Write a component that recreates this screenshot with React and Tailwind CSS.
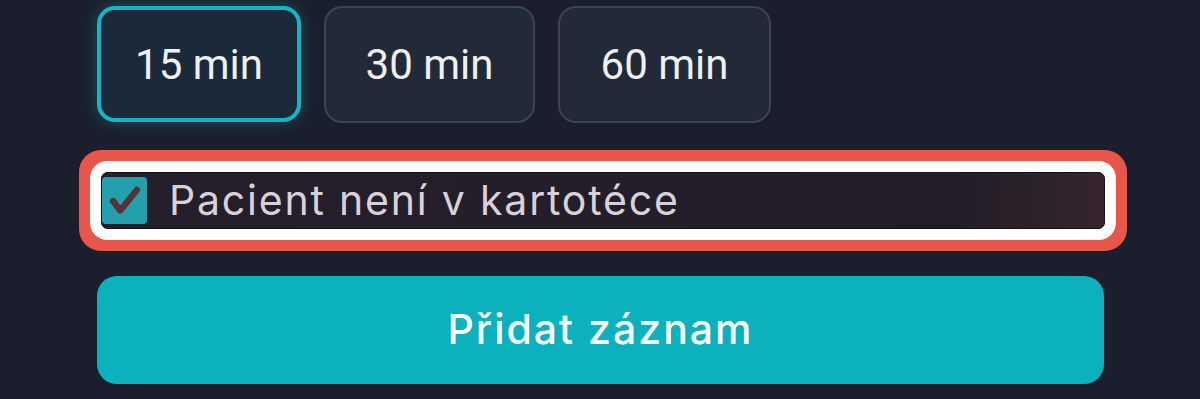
import React, { useState } from "react";

const DURATIONS = [
  { label: "15 min", width: "w-[204px]" },
  { label: "30 min", width: "w-[211px]" },
  { label: "60 min", width: "w-[213px]" },
];

const App = () => {
  const [duration, setDuration] = useState("15 min");
  const [notInRegistry, setNotInRegistry] = useState(true);

  return (
    <div className="w-[1200px] h-[399px] overflow-hidden bg-[#1b1f2d] pl-[97px] pt-[6px] font-['Inter','Liberation_Sans',sans-serif]">
      <div className="flex gap-[23px]">
        {DURATIONS.map((d) =>
          d.label === duration ? (
            <button
              key={d.label}
              onClick={() => setDuration(d.label)}
              className={`${d.width} h-[116px] rounded-[18px] border-[4px] border-[#17b4c5] bg-[#1a2a3a] shadow-[0_0_14px_rgba(23,180,197,0.35)] text-[42px] text-[#eef0f2] font-['Roboto',sans-serif]`}
            >
              {d.label}
            </button>
          ) : (
            <button
              key={d.label}
              onClick={() => setDuration(d.label)}
              className={`${d.width} h-[117px] rounded-[18px] border-2 border-[#3d4451] bg-[#232a37] text-[42px] text-[#eef0f2] font-['Roboto',sans-serif]`}
            >
              {d.label}
            </button>
          )
        )}
      </div>

      <label className="mt-[49px] w-[1004px] h-[57px] ml-[4px] flex items-center gap-[22px] rounded-[7px] border border-[#14111a] bg-[linear-gradient(90deg,#241f2b_0%,#221d27_85%,#36252d_100%)] shadow-[0_0_0_11px_#ffffff,0_0_0_22px_#e8554a] cursor-pointer">
        <span
          onClick={(e) => {
            e.preventDefault();
            setNotInRegistry(!notInRegistry);
          }}
          className="w-[45px] h-[47px] shrink-0 rounded-[4px] bg-[#23a0ab] flex items-center justify-center"
        >
          {notInRegistry && (
            <svg width="38" height="38" viewBox="0 0 24 24" fill="none">
              <path
                d="M4.5 12l4.5 6L19.5 5"
                stroke="#57303a"
                strokeWidth="4"
                strokeLinecap="round"
                strokeLinejoin="round"
              />
            </svg>
          )}
        </span>
        <span className="text-[41px] leading-none text-[#d6d2d8] tracking-[1.8px]">
          Pacient není v kartotéce
        </span>
      </label>

      <button className="mt-[47px] w-[1007px] h-[108px] rounded-[20px] bg-[#0bb2bd] text-white text-[41px] font-medium tracking-[2px]">
        Přidat záznam
      </button>
    </div>
  );
};

export default App;
